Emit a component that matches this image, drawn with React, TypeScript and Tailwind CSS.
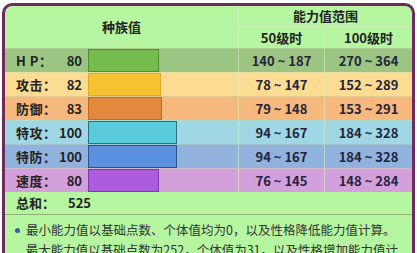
import React from "react";

const rows = [
  { label: "H P：", value: 80, r50: "140 ~ 187", r100: "270 ~ 364", bg: "bg-[#9cc584]", bar: "bg-[#76bb4e] border-[#4f8f33]" },
  { label: "攻击：", value: 82, r50: "78 ~ 147", r100: "152 ~ 289", bg: "bg-[#fcdb93]", bar: "bg-[#f6c232] border-[#e0a828]" },
  { label: "防御：", value: 83, r50: "79 ~ 148", r100: "153 ~ 291", bg: "bg-[#f6b87c]", bar: "bg-[#e2893d] border-[#b8692c]" },
  { label: "特攻：", value: 100, r50: "94 ~ 167", r100: "184 ~ 328", bg: "bg-[#9fd8e4]", bar: "bg-[#5acbdc] border-[#2b6f80]" },
  { label: "特防：", value: 100, r50: "94 ~ 167", r100: "184 ~ 328", bg: "bg-[#90b2dc]", bar: "bg-[#5b90df] border-[#2b4f8c]" },
  { label: "速度：", value: 80, r50: "76 ~ 145", r100: "148 ~ 284", bg: "bg-[#d4a0dc]", bar: "bg-[#ad5ce0] border-[#7b3aa4]" },
];

export default function App() {
  return (
    <div className="w-[417px] h-[253px] overflow-hidden bg-white pt-[3px] pl-[2px]" style={{ fontFamily: '"Noto Sans CJK SC", "Noto Sans", sans-serif' }}>
      <div className="w-[413px] border-[3px] border-b-0 border-[#6e2c5e] rounded-t-[10px] bg-[#b6f6a0] text-[#222] overflow-hidden">
        {/* header */}
        <div className="grid grid-cols-[234px_86px_87px] h-[42px]">
          <div className="flex items-center justify-center text-[13px] font-bold border-r border-[#cdeebb]">种族值</div>
          <div className="col-span-2 flex flex-col">
            <div className="h-[21px] flex items-center justify-center text-[13px] font-bold border-b border-[#cdeebb]">能力值范围</div>
            <div className="flex-1 grid grid-cols-[86px_87px]">
              <div className="flex items-center justify-center text-[13px] font-bold border-r border-[#cdeebb]">50级时</div>
              <div className="flex items-center justify-center text-[13px] font-bold">100级时</div>
            </div>
          </div>
        </div>
        {rows.map((r) => (
          <div key={r.label} className={`grid grid-cols-[83px_151px_86px_87px] h-[24px] ${r.bg} border-t border-[#c6e6b2]/40`}>
            <div className="flex items-center pl-[11px] pr-[6px] text-[13px]">
              <span className="font-semibold tracking-[0.5px] w-[46px]">{r.label}</span>
              <span className="flex-1 text-right font-bold">{r.value}</span>
            </div>
            <div className="flex items-stretch border-r border-[#d8f0c4]/60">
              <div className={`${r.bar} border h-full`} style={{ width: Math.round(r.value * 0.89) }} />
            </div>
            <div className="flex items-center justify-center text-[13px] font-bold text-[#23233a] border-r border-[#d8f0c4]/60">{r.r50}</div>
            <div className="flex items-center justify-center text-[13px] font-bold text-[#23233a]">{r.r100}</div>
          </div>
        ))}
        <div className="h-[23px] flex items-center pl-[11px] text-[13px] border-b border-[#8fb07a]">
          <span className="font-semibold w-[52px]">总和：</span>
          <span className="font-bold">525</span>
        </div>
        <ul className="pl-[10px] pt-[5px] text-[12.5px] leading-[20px] text-[#333]">
          <li className="flex items-center gap-[6px]">
            <span className="w-[5px] h-[5px] rounded-full bg-[#3a5f9f] inline-block" />
            <span>最小能力值以基础点数、个体值均为0，以及性格降低能力值计算。</span>
          </li>
          <li className="flex items-center gap-[6px]">
            <span className="w-[5px] h-[5px] rounded-full bg-[#3a5f9f] inline-block" />
            <span>最大能力值以基础点数为252，个体值为31，以及性格增加能力值计算。</span>
          </li>
        </ul>
      </div>
    </div>
  );
}
